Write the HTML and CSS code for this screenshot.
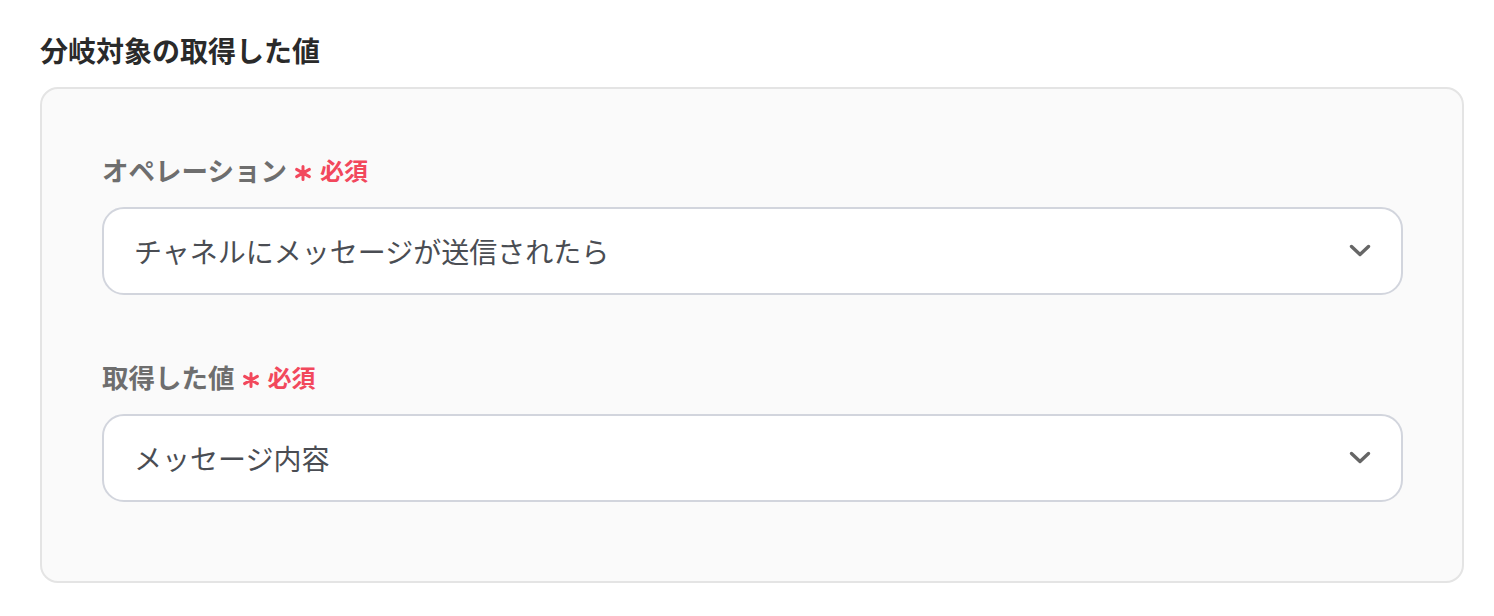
FILE: index.html
```html
<!DOCTYPE html>
<html lang="ja">
<head>
<meta charset="utf-8">
<link rel="stylesheet" href="styles.css">
</head>
<body>
<div class="page">
  <h2 class="title">分岐対象の取得した値</h2>
  <div class="panel">
    <div class="field">
      <div class="label">オペレーション<span class="req"><svg class="ast" width="20" height="16" viewBox="0 0 20 16"><path d="M10 1.5 V14.5 M3.6 4.4 L16.4 11.6 M3.6 11.6 L16.4 4.4" fill="none" stroke="#f2485c" stroke-width="3" stroke-linecap="round"/></svg>必須</span></div>
      <div class="select">
        <span class="value">チャネルにメッセージが送信されたら</span>
        <svg class="chev" width="22" height="14" viewBox="0 0 22 14"><path d="M2.5 2.5 L11 10.5 L19.5 2.5" fill="none" stroke="#666" stroke-width="3.4" stroke-linecap="round" stroke-linejoin="round"/></svg>
      </div>
    </div>
    <div class="field">
      <div class="label">取得した値<span class="req"><svg class="ast" width="20" height="16" viewBox="0 0 20 16"><path d="M10 1.5 V14.5 M3.6 4.4 L16.4 11.6 M3.6 11.6 L16.4 4.4" fill="none" stroke="#f2485c" stroke-width="3" stroke-linecap="round"/></svg>必須</span></div>
      <div class="select">
        <span class="value">メッセージ内容</span>
        <svg class="chev" width="22" height="14" viewBox="0 0 22 14"><path d="M2.5 2.5 L11 10.5 L19.5 2.5" fill="none" stroke="#666" stroke-width="3.4" stroke-linecap="round" stroke-linejoin="round"/></svg>
      </div>
    </div>
  </div>
</div>
</body>
</html>
```

FILE: styles.css
```css
html, body {
  margin: 0;
  padding: 0;
  background: #ffffff;
}
body {
  font-family: "Noto Sans CJK JP", "Noto Sans", sans-serif;
}
.page {
  padding: 30px 30px 0 40px;
}
.title {
  margin: 0 0 17px 0;
  font-size: 28px;
  line-height: 40px;
  font-weight: 700;
  color: #2a2a2a;
}
.panel {
  width: 1424px;
  box-sizing: border-box;
  border: 2px solid #e4e4e4;
  border-radius: 18px;
  background: #fafafa;
  padding: 63px 59px 79px 60px;
  display: flex;
  flex-direction: column;
  gap: 64px;
}
.field {
  display: flex;
  flex-direction: column;
  gap: 19px;
}
.label {
  font-size: 26.5px;
  line-height: 36px;
  font-weight: 700;
  color: #6e6e6e;
  display: flex;
  align-items: center;
}
.req {
  color: #f2485c;
  font-size: 24px;
  font-weight: 700;
  margin-left: 6px;
  display: flex;
  align-items: center;
}
.ast {
  display: block;
  margin: 6px 7px 0 0;
}
.select {
  height: 88px;
  box-sizing: border-box;
  border: 2px solid #d2d5dd;
  border-radius: 22px;
  background: #ffffff;
  display: flex;
  align-items: center;
  justify-content: space-between;
  padding: 0 30px 0 30px;
}
.value {
  font-size: 28px;
  color: #4a4d53;
}
.chev {
  display: block;
}
```
